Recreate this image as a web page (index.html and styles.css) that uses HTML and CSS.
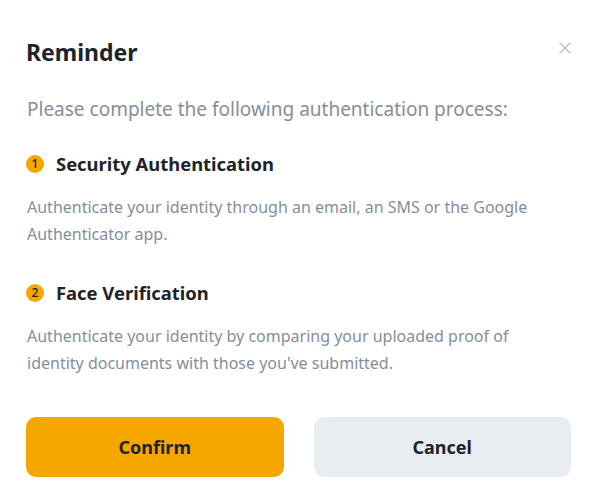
FILE: index.html
```html
<!DOCTYPE html>
<html lang="en">
<head>
    <meta charset="UTF-8">
    <meta name="viewport" content="width=device-width, initial-scale=1.0">
    <link rel="stylesheet" href="styles.css">
    <title>Reminder</title>
</head>
<body>
    <div class="modal">
        <div class="modal-header">
            <h1 class="modal-title">Reminder</h1>
            <button class="close-btn" aria-label="Close">
                <svg width="12" height="12" viewBox="0 0 12 12">
                    <path d="M0.5 0.5 L11.5 11.5 M11.5 0.5 L0.5 11.5" stroke="#b7bdc6" stroke-width="1.2" fill="none"/>
                </svg>
            </button>
        </div>
        <p class="intro">Please complete the following authentication process:</p>

        <div class="step">
            <div class="step-title"><span class="badge">1</span>Security Authentication</div>
            <p class="step-desc">Authenticate your identity through an email, an SMS or the Google Authenticator app.</p>
        </div>

        <div class="step">
            <div class="step-title"><span class="badge">2</span>Face Verification</div>
            <p class="step-desc">Authenticate your identity by comparing your uploaded proof of identity documents with those you've submitted.</p>
        </div>

        <div class="actions">
            <button class="btn btn-primary">Confirm</button>
            <button class="btn btn-secondary">Cancel</button>
        </div>
    </div>
</body>
</html>
```

FILE: styles.css
```css
body {
    margin: 0;
    background-color: #fff;
    font-family: "Noto Sans", "Liberation Sans", sans-serif;
    color: #1e2329;
}

.modal {
    width: 600px;
    box-sizing: border-box;
    padding: 36px 29px 28px 26px;
}

.modal-header {
    display: flex;
    justify-content: space-between;
    align-items: flex-start;
}

.modal-title {
    margin: 0;
    font-size: 23px;
    line-height: 32px;
    font-weight: 700;
}

.close-btn {
    border: none;
    background: none;
    padding: 0;
    margin-top: 6px;
    width: 12px;
    height: 12px;
    cursor: pointer;
}

.close-btn svg {
    display: block;
}

.intro {
    margin: 28px 0 0 1px;
    font-size: 19px;
    line-height: 26px;
    color: #848e9c;
}

.step {
    margin-top: 29px;
}

.step + .step {
    margin-top: 32px;
}

.step-title {
    display: flex;
    align-items: center;
    font-size: 18.4px;
    line-height: 26px;
    font-weight: 700;
}

.badge {
    display: inline-flex;
    align-items: center;
    justify-content: center;
    width: 18px;
    height: 18px;
    margin-right: 12px;
    border-radius: 50%;
    background-color: #f5a700;
    color: #1e2329;
    font-size: 12px;
    font-weight: 500;
}

.step-desc {
    max-width: 506px;
    margin: 17px 0 0 1px;
    font-size: 16px;
    line-height: 27px;
    color: #848e9c;
}

.actions {
    display: flex;
    gap: 30px;
    margin-top: 40px;
}

.btn {
    flex: 1;
    height: 60px;
    border: none;
    border-radius: 10px;
    font-family: inherit;
    font-size: 18px;
    font-weight: 700;
    color: #1e2329;
    cursor: pointer;
}

.btn-primary {
    background-color: #f5a700;
}

.btn-secondary {
    background-color: #e9ecf1;
}
```
